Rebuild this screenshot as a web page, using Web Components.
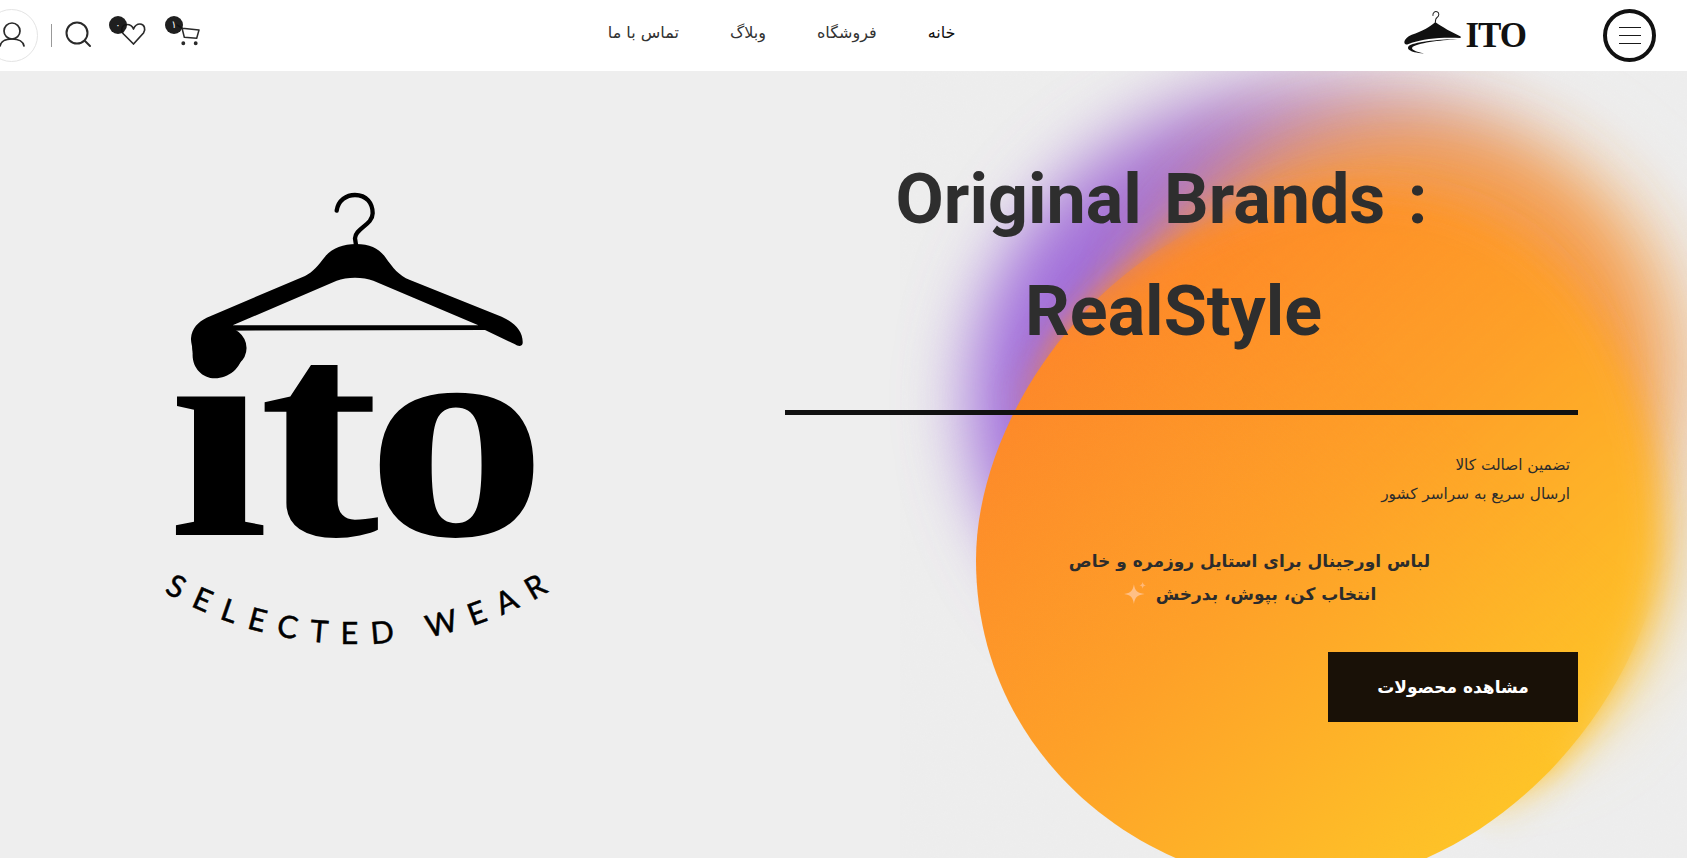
<!DOCTYPE html>
<html lang="fa" dir="rtl">
<head>
<meta charset="utf-8">
<title>ITO</title>
<style>
  html, body { margin: 0; height: 100%; overflow: hidden; background: #eee; }
  body { font-family: "DejaVu Sans", "Noto Sans", sans-serif; }
</style>
</head>
<body>
<site-header></site-header>
<hero-section></hero-section>

<script>
const FONT = '"DejaVu Sans", "Noto Sans", sans-serif';

class IconButton extends HTMLElement {
  connectedCallback() {
    const badge = this.getAttribute('badge');
    this.attachShadow({ mode: 'open' }).innerHTML = `
      <style>
        :host { display: block; position: relative; height: 71px; }
        ::slotted(svg) { display: block; }
        .badge {
          position: absolute;
          top: 16px;
          left: 0;
          width: 18px;
          height: 18px;
          border-radius: 50%;
          background: rgba(17, 17, 17, .94);
          color: #fff;
          font: 10px/18px ${FONT};
          text-align: center;
        }
      </style>
      <slot></slot>
      ${badge ? `<span class="badge">${badge}</span>` : ''}
    `;
  }
}
customElements.define('icon-button', IconButton);

class SiteHeader extends HTMLElement {
  connectedCallback() {
    this.attachShadow({ mode: 'open' }).innerHTML = `
      <style>
        :host {
          display: flex;
          align-items: center;
          height: 71px;
          padding-right: 31px;
          background: #fff;
          direction: rtl;
          font-family: ${FONT};
        }
        .burger {
          width: 53px;
          height: 53px;
          box-sizing: border-box;
          border: 4px solid #111;
          border-radius: 50%;
          display: flex;
          flex-direction: column;
          justify-content: center;
          align-items: center;
          gap: 6.5px;
        }
        .burger i { display: block; width: 22px; height: 1.5px; background: #1a1a1a; }
        .logo { display: flex; align-items: center; gap: 3px; margin-right: 77px; direction: ltr; }
        .logo svg { display: block; margin-bottom: 8px; }
        .logo b {
          font: bold 35px/1 "Liberation Serif", serif;
          letter-spacing: -1px;
          color: #111;
        }
        nav { display: flex; gap: 51px; margin: 0 449px 6px 0; font-size: 16px; }
        nav a { color: #333; text-decoration: none; }
        nav a:first-child { color: #111; }
        .actions {
          margin-right: auto;
          display: flex;
          direction: ltr;
          align-items: center;
          margin-left: -15px;
        }
        .user {
          width: 53px;
          height: 53px;
          box-sizing: border-box;
          border: 1px solid #e4e4e4;
          border-radius: 50%;
          display: flex;
          align-items: center;
          justify-content: center;
        }
        .sep { width: 1px; height: 23px; background: #999; margin: 0 13px; }
        svg.ic { fill: none; stroke: #2a2a2a; stroke-width: 1.7; stroke-linecap: round; stroke-linejoin: round; }
      </style>
      <div class="burger"><i></i><i></i><i></i></div>
      <div class="logo">
        <svg width="58" height="44" viewBox="112 25 172 130">
          <path d="M198 42C196 32 204 28 210 30C218 33 216 43 210 47C205 50 205 55 205 62" fill="none" stroke="#222" stroke-width="3"/>
          <path d="M205 60C212 66 240 84 280 103L280 108C230 104 170 110 135 122C122 127 118 130 114 124C110 116 120 104 135 98C165 88 190 74 205 60Z" fill="#111"/>
          <path d="M280 110C220 112 150 118 128 130C118 138 124 150 172 154C145 148 130 142 138 134C160 120 230 114 280 110Z" fill="#111"/>
        </svg>
        <b>ITO</b>
      </div>
      <nav>
        <a href="#">خانه</a>
        <a href="#">فروشگاه</a>
        <a href="#">وبلاگ</a>
        <a href="#">تماس با ما</a>
      </nav>
      <div class="actions">
        <div class="user">
          <svg class="ic" width="26" height="28" viewBox="0 0 26 28">
            <circle cx="13" cy="9" r="8"/>
            <path d="M1 24C2 19 7 17 13 17C19 17 24 19 25 24"/>
          </svg>
        </div>
        <span class="sep"></span>
        <svg class="ic" width="27" height="27" viewBox="0 0 27 27" style="stroke-width:2;margin-bottom:2px">
          <circle cx="12" cy="12" r="10.5"/>
          <path d="M20 20L25 25"/>
        </svg>
        <icon-button badge="۰" style="margin-left:17px;width:44px">
          <svg class="ic" width="44" height="71" viewBox="0 0 44 71">
            <path d="M24.500 44L14.500 34C11 30 13 24.500 18 24.500C21 24.500 23.500 26.500 24.500 29C25.500 26.500 28 24 31 24C35.500 24 37 29.500 34.500 33Z"/>
          </svg>
        </icon-button>
        <icon-button badge="۱" style="margin-left:12px;width:38px">
          <svg class="ic" width="38" height="71" viewBox="0 0 38 71" style="stroke-width:1.5">
            <path d="M12 25L17 28L19.300 37.300L31.700 38.300L34 30L17.300 28.300"/>
            <circle cx="18.300" cy="43.300" r="1.2" fill="#2a2a2a"/>
            <circle cx="30.700" cy="43.300" r="1.2" fill="#2a2a2a"/>
          </svg>
        </icon-button>
      </div>
    `;
  }
}
customElements.define('site-header', SiteHeader);

class GradientBlob extends HTMLElement {
  connectedCallback() {
    const shape = 'M976 560C976 400 1130 190 1360 190C1560 190 1660 370 1660 540C1660 670 1510 885 1300 885C1150 885 976 760 976 560Z';
    this.attachShadow({ mode: 'open' }).innerHTML = `
      <style>
        :host { display: block; position: absolute; inset: 0; overflow: hidden; }
        svg { display: block; }
      </style>
      <svg width="1687" height="787" viewBox="0 71 1687 787">
        <defs>
          <linearGradient id="disc" gradientUnits="userSpaceOnUse" x1="1020" y1="330" x2="1480" y2="830">
            <stop offset="0" stop-color="#fe8528"/>
            <stop offset=".5" stop-color="#ffa026"/>
            <stop offset="1" stop-color="#ffc326"/>
          </linearGradient>
          <linearGradient id="halo" gradientUnits="userSpaceOnUse" x1="1050" y1="300" x2="1560" y2="120">
            <stop offset="0" stop-color="#a06cdc"/>
            <stop offset=".4" stop-color="#ab78cc"/>
            <stop offset="1" stop-color="#eedcc8"/>
          </linearGradient>
          <linearGradient id="edge" gradientUnits="userSpaceOnUse" x1="1300" y1="550" x2="1430" y2="400">
            <stop offset="0" stop-color="#fff"/>
            <stop offset="1" stop-color="#000"/>
          </linearGradient>
          <linearGradient id="edge2" gradientUnits="userSpaceOnUse" x1="1235" y1="625" x2="1300" y2="550">
            <stop offset="0" stop-color="#000"/>
            <stop offset="1" stop-color="#fff"/>
          </linearGradient>
          <mask id="sharp"><rect x="800" y="71" width="900" height="800" fill="url(#edge)"/></mask>
          <mask id="soft"><rect x="800" y="0" width="900" height="900" fill="url(#edge2)"/></mask>
          <filter id="b38" x="-40%" y="-40%" width="180%" height="180%"><feGaussianBlur stdDeviation="34"/></filter>
          <filter id="b20" x="-30%" y="-30%" width="160%" height="160%"><feGaussianBlur stdDeviation="17"/></filter>
          <filter id="grain" x="0" y="0" width="100%" height="100%">
            <feTurbulence type="fractalNoise" baseFrequency=".9" numOctaves="2"/>
            <feColorMatrix values="0 0 0 0 .5  0 0 0 0 .5  0 0 0 0 .5  0 0 0 .5 0"/>
          </filter>
        </defs>
        <ellipse cx="1345" cy="400" rx="375" ry="325" fill="url(#halo)" filter="url(#b38)"/>
        <ellipse cx="1490" cy="560" rx="180" ry="200" fill="#f8d888" filter="url(#b38)"/>
        <g mask="url(#soft)">
          <ellipse cx="1400" cy="365" rx="265" ry="245" fill="#f8983c" opacity=".9" filter="url(#b38)"/>
          <path d="${shape}" fill="url(#disc)" filter="url(#b20)"/>
        </g>
        <path d="${shape}" fill="url(#disc)" mask="url(#sharp)"/>
        <rect x="900" y="71" width="787" height="787" filter="url(#grain)" opacity=".06"/>
      </svg>
    `;
  }
}
customElements.define('gradient-blob', GradientBlob);

class BrandMark extends HTMLElement {
  connectedCallback() {
    this.attachShadow({ mode: 'open' }).innerHTML = `
      <style>
        :host { display: block; width: 450px; height: 490px; }
        svg { display: block; }
      </style>
      <svg width="450" height="490" viewBox="0 0 1350 1470">
        <path d="M590 122C595 90 620 75 645 75C680 75 698 100 698 130C698 165 645 175 645 205L648 225" fill="none" stroke="#000" stroke-width="13" stroke-linecap="round"/>
        <g transform="scale(1.2,1)"><text x="70 297 565" y="1095" font-family="Liberation Serif" font-weight="700" font-size="906" fill="#000">ito</text></g>
        <path fill="#000" fill-rule="evenodd" d="M648 222C690 222 715 235 735 260C760 295 775 315 810 330L1085 440C1125 458 1150 485 1148 520C1146 530 1135 530 1125 523L1035 480L245 482C285 490 310 520 308 550C305 595 265 625 225 625C185 625 155 590 158 550C160 535 152 520 153 505C155 475 175 455 200 443L495 318C520 305 535 285 555 260C575 235 610 222 648 222ZM278 466L590 332C620 320 670 320 700 332L1015 466Z"/>
        <path id="arc" d="M72 1265A1138 1138 0 0 0 1238 1258" fill="none"/>
        <text font-family="Lato" font-size="92" fill="#000" stroke="#000" stroke-width="1.5" letter-spacing="40"><textPath href="#arc">SELECTED WEAR</textPath></text>
      </svg>
    `;
  }
}
customElements.define('brand-mark', BrandMark);

class HeroSection extends HTMLElement {
  connectedCallback() {
    this.attachShadow({ mode: 'open' }).innerHTML = `
      <style>
        :host {
          display: grid;
          grid-template-columns: 785px 793px;
          position: relative;
          height: 787px;
          overflow: hidden;
          background: #eee;
          direction: ltr;
          font-family: ${FONT};
        }
        .left { position: relative; padding: 99px 0 0 140px; }
        .right { position: relative; display: flex; flex-direction: column; padding-top: 72px; }
        h1 {
          margin: 0;
          font: 700 70px/112px Roboto, sans-serif;
          color: #2e2e2e;
          text-align: center;
          word-spacing: 5px;
        }
        h1 span { display: block; }
        h1 .a { padding-right: 40px; }
        h1 .b { padding-right: 16px; }
        hr { width: 100%; height: 5px; margin: 43px 0 0; border: 0; background: #111; }
        .notes { margin: 36px 8px 0 0; direction: rtl; font-size: 15.300px; line-height: 29px; color: #2c2c2c; }
        .tag {
          margin: 36px 0 0;
          padding-left: 136px;
          direction: rtl;
          text-align: center;
          font-size: 17px;
          font-weight: 700;
          line-height: 33px;
          color: #2c2c2c;
        }
        .tag svg { vertical-align: -5px; margin-right: 9px; }
        a.cta {
          align-self: flex-end;
          width: 250px;
          height: 70px;
          margin-top: 41px;
          display: flex;
          align-items: center;
          justify-content: center;
          background: #191107;
          color: #fff;
          font-size: 17px;
          font-weight: 700;
          text-decoration: none;
          direction: rtl;
        }
      </style>
      <gradient-blob></gradient-blob>
      <div class="left"><brand-mark></brand-mark></div>
      <div class="right">
        <h1><span class="a">Original Brands :</span><span class="b">RealStyle</span></h1>
        <hr>
        <div class="notes">تضمین اصالت کالا<br>ارسال سریع به سراسر کشور</div>
        <p class="tag">لباس اورجینال برای استایل روزمره و خاص<br>انتخاب کن، بپوش، بدرخش<svg width="24" height="24" viewBox="0 0 22 22"><path d="M10 3C11 9 13 11 20 12C13 13 11 15 10 21C9 15 7 13 1 12C7 11 9 9 10 3Z" fill="#ffbf85"/><path d="M18 1C18.400 3 19 3.600 21 4C19 4.400 18.400 5 18 7C17.600 5 17 4.400 15 4C17 3.600 17.600 3 18 1Z" fill="#ffb878"/></svg></p>
        <a class="cta" href="#">مشاهده محصولات</a>
      </div>
    `;
  }
}
customElements.define('hero-section', HeroSection);
</script>
</body>
</html>
